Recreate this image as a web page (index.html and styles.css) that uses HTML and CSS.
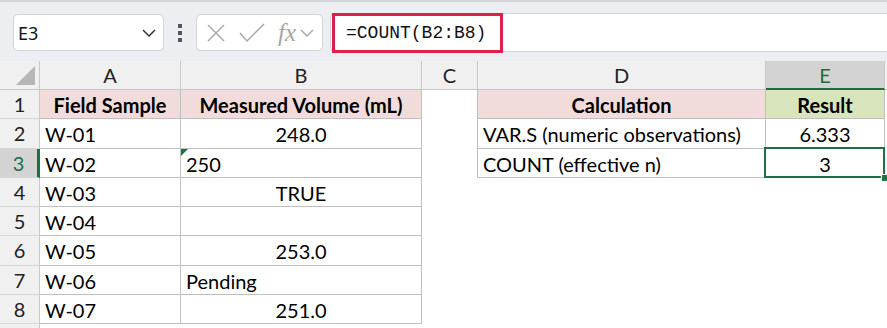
FILE: index.html
```html
<!DOCTYPE html>
<html lang="en">
<head>
  <meta charset="UTF-8" />
  <meta name="viewport" content="width=device-width, initial-scale=1" />
  <title>COUNT effective n</title>
  <link rel="stylesheet" href="styles.css">
</head>
<body>
  <div class="toolbar">
    <div class="namebox">
      <span>E3</span>
      <svg class="chev" width="16" height="10" viewBox="0 0 16 10"><path d="M2 2 L8 8 L14 2" fill="none" stroke="#333" stroke-width="1.5"/></svg>
    </div>
    <div class="dots"><i></i><i></i><i></i></div>
    <div class="fxbox">
      <svg width="20" height="20" viewBox="0 0 20 20"><path d="M2 2 L18 18 M18 2 L2 18" stroke="#a6a6a6" stroke-width="1.4" fill="none"/></svg>
      <svg width="26" height="20" viewBox="0 0 26 20"><path d="M1 10 L8 18 L25 1" stroke="#a6a6a6" stroke-width="1.4" fill="none"/></svg>
      <span class="fx">fx</span>
      <svg width="14" height="10" viewBox="0 0 14 10"><path d="M1 2 L7 8 L13 2" fill="none" stroke="#a6a6a6" stroke-width="1.4"/></svg>
    </div>
    <div class="formula">
      <span class="highlight">=COUNT(B2:B8)</span>
    </div>
  </div>

  <div class="sheet">
    <!-- column headers -->
    <div class="corner"><span class="tri"></span></div>
    <div class="ch">A</div>
    <div class="ch">B</div>
    <div class="ch">C</div>
    <div class="ch">D</div>
    <div class="ch active">E</div>
    <div class="ch end"></div>

    <!-- row 1 -->
    <div class="rh">1</div>
    <div class="c t pink bold center">Field Sample</div>
    <div class="c t pink bold center">Measured Volume (mL)</div>
    <div class="c edge"></div>
    <div class="c t pink bold center">Calculation</div>
    <div class="c t green bold center">Result</div>
    <div class="c"></div>

    <!-- row 2 -->
    <div class="rh">2</div>
    <div class="c t">W-01</div>
    <div class="c t center">248.0</div>
    <div class="c edge"></div>
    <div class="c t">VAR.S (numeric observations)</div>
    <div class="c t center">6.333</div>
    <div class="c"></div>

    <!-- row 3 -->
    <div class="rh active">3</div>
    <div class="c t">W-02</div>
    <div class="c t flag">250</div>
    <div class="c edge"></div>
    <div class="c t">COUNT (effective n)</div>
    <div class="c t center selected">3<span class="handle"></span></div>
    <div class="c"></div>

    <!-- row 4 -->
    <div class="rh">4</div>
    <div class="c t">W-03</div>
    <div class="c t center">TRUE</div>
    <div class="c"></div><div class="c"></div><div class="c"></div><div class="c"></div>

    <!-- row 5 -->
    <div class="rh">5</div>
    <div class="c t">W-04</div>
    <div class="c t"></div>
    <div class="c"></div><div class="c"></div><div class="c"></div><div class="c"></div>

    <!-- row 6 -->
    <div class="rh">6</div>
    <div class="c t">W-05</div>
    <div class="c t center">253.0</div>
    <div class="c"></div><div class="c"></div><div class="c"></div><div class="c"></div>

    <!-- row 7 -->
    <div class="rh">7</div>
    <div class="c t">W-06</div>
    <div class="c t">Pending</div>
    <div class="c"></div><div class="c"></div><div class="c"></div><div class="c"></div>

    <!-- row 8 -->
    <div class="rh">8</div>
    <div class="c t">W-07</div>
    <div class="c t center">251.0</div>
    <div class="c"></div><div class="c"></div><div class="c"></div><div class="c"></div>

    <!-- row 9 (cut off) -->
    <div class="rh"></div>
  </div>
</body>
</html>
```

FILE: styles.css
```css
body {
  margin: 0;
  background: #fff;
  font-family: Lato, "Liberation Sans", sans-serif;
  color: #000;
  height: 328px;
  overflow: hidden;
}
.toolbar {
  display: flex;
  align-items: center;
  height: 61px;
  box-sizing: border-box;
  padding: 12px 0 10px 13px;
  background: #eceef1;
  border-top: 2px solid #d6d8db;
}
.namebox {
  display: flex;
  align-items: center;
  justify-content: space-between;
  width: 151px;
  height: 37px;
  box-sizing: border-box;
  padding: 0 6px 0 4px;
  background: #fff;
  border: 1px solid #d2d4d7;
  border-radius: 5px;
  font-family: "Noto Sans", sans-serif;
  font-size: 18px;
  color: #111;
}
.dots {
  width: 32px;
  display: flex;
  flex-direction: column;
  align-items: center;
  gap: 3px;
}
.dots i {
  width: 4px;
  height: 4px;
  background: #555;
}
.fxbox {
  display: flex;
  align-items: center;
  gap: 13px;
  width: 127px;
  height: 37px;
  box-sizing: border-box;
  padding: 0 3px 0 9px;
  background: #fff;
  border: 1px solid #d2d4d7;
  border-radius: 5px;
}
.fxbox svg:last-child {
  margin-left: -9px;
}
.fx {
  font-family: "Liberation Serif", serif;
  font-style: italic;
  font-size: 25px;
  color: #a6a6a6;
  line-height: 1;
}
.formula {
  flex: 1;
  height: 37px;
  margin-left: 7px;
  display: flex;
  align-items: center;
  background: #fff;
  border: 1px solid #d2d4d7;
  border-right: none;
  border-radius: 5px 0 0 5px;
}
.highlight {
  display: flex;
  align-items: center;
  height: 40px;
  box-sizing: border-box;
  margin: 0 0 0 1px;
  padding: 0 14px 0 11px;
  border: 3px solid #df1f4b;
  font-family: "Liberation Mono", monospace;
  font-size: 18px;
  color: #111;
}

.sheet {
  display: grid;
  grid-template-columns: 40px 141px 241px 56px 288px 119px 1fr;
  grid-template-rows: 29px repeat(8, 29.25px) 10px;
  font-size: 20px;
}
.corner {
  position: relative;
  background: #f0f0f0;
  border-right: 1px solid #c8c8c8;
  border-bottom: 1px solid #c8c8c8;
}
.tri {
  position: absolute;
  right: 4px;
  bottom: 4px;
  width: 0;
  height: 0;
  border-left: 19px solid transparent;
  border-bottom: 19px solid #b6b6b6;
}
.ch {
  display: flex;
  align-items: center;
  justify-content: center;
  background: #f0f0f0;
  border-right: 1px solid #c8c8c8;
  border-bottom: 1px solid #c8c8c8;
  color: #222;
}
.ch.active {
  background: #d3d3d3;
  color: #1e6e42;
  border-bottom: 2px solid #1e6e42;
}
.ch.end {
  border-right: none;
}
.rh {
  display: flex;
  align-items: center;
  justify-content: center;
  background: #f0f0f0;
  border-right: 1px solid #c8c8c8;
  border-bottom: 1px solid #d6d6d6;
  color: #222;
  box-sizing: border-box;
}
.rh.active {
  background: #d3d3d3;
  color: #1e6e42;
  border-right: 3px solid #1e6e42;
}
.c {
  display: flex;
  align-items: center;
  padding: 2px 5px 0;
  white-space: nowrap;
  position: relative;
}
.t {
  border-right: 1px solid #bfbfbf;
  border-bottom: 1px solid #bfbfbf;
}
.edge {
  border-right: 1px solid #bfbfbf;
}
.center {
  justify-content: center;
}
.bold {
  font-weight: bold;
}
.pink {
  background: #f2dcdb;
}
.green {
  background: #d8e4bc;
}
.flag::before {
  content: "";
  position: absolute;
  left: 0;
  top: 0;
  border-top: 7px solid #1e7145;
  border-right: 7px solid transparent;
}
.selected::after {
  content: "";
  position: absolute;
  left: -2px;
  top: -2px;
  right: -1px;
  bottom: -1px;
  border: 2px solid #1e7145;
}
.handle {
  position: absolute;
  right: -5px;
  bottom: -5px;
  width: 6px;
  height: 6px;
  background: #1e7145;
  border: 1px solid #fff;
  z-index: 1;
}
```
